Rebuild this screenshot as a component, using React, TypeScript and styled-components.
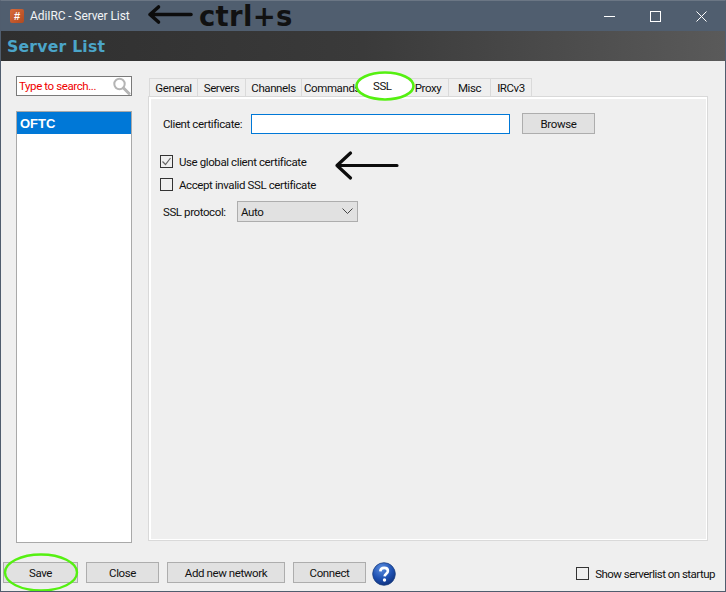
import React from "react";
import styled, { createGlobalStyle } from "styled-components";

const Global = createGlobalStyle`
  html, body { margin: 0; padding: 0; background: #efefef; }
  * { box-sizing: border-box; }
`;

const Window = styled.div`
  position: relative;
  width: 726px;
  height: 592px;
  display: flex;
  flex-direction: column;
  background: #efefef;
  border: 1px solid #505d6e;
  border-top-color: #6b7684;
  font-family: "Roboto", "Liberation Sans", sans-serif;
  font-size: 11.5px;
  letter-spacing: -0.4px;
  color: #111;
  overflow: hidden;
`;

const TitleBar = styled.div`
  height: 30px;
  flex: none;
  display: flex;
  align-items: center;
  background: #505e6f;
  color: #f2f4f6;
  padding-left: 9px;
`;

const AppIcon = styled.div`
  width: 14px;
  height: 14px;
  border-radius: 2px;
  background: linear-gradient(135deg, #d96a3a, #b04a20);
  color: #fff;
  font: bold 11px/14px "Liberation Sans", sans-serif;
  letter-spacing: 0;
  text-align: center;
`;

const TitleText = styled.span`
  margin-left: 6px;
  font-size: 12px;
  letter-spacing: -0.1px;
`;

const WindowControls = styled.div`
  margin-left: auto;
  display: flex;
  align-items: center;
  padding-right: 1px;
`;

const ControlCell = styled.div`
  width: 46px;
  height: 30px;
  display: flex;
  align-items: center;
  justify-content: center;
`;

const Banner = styled.div`
  height: 30px;
  flex: none;
  display: flex;
  align-items: center;
  padding-left: 6px;
  background: linear-gradient(90deg, #2f2f2f, #3a3a3a 50%, #5a5a5a);
  color: #4ba5c9;
  font: bold 15.7px "DejaVu Sans", sans-serif;
  letter-spacing: 0.2px;
`;

const Body = styled.div`
  height: 482px;
  flex: none;
  display: flex;
  padding: 15px 17px 0 15px;
`;

const LeftColumn = styled.div`
  width: 116px;
  flex: none;
  display: flex;
  flex-direction: column;
`;

const SearchBox = styled.div`
  height: 20px;
  flex: none;
  display: flex;
  align-items: center;
  justify-content: space-between;
  padding: 0 0 0 2px;
  background: #fff;
  border: 1px solid #7a7a7a;
  color: #f00000;
`;

const NetworkList = styled.div`
  margin-top: 15px;
  height: 432px;
  flex: none;
  background: #fff;
  border: 1px solid #a9a9a9;
`;

const NetworkItem = styled.div<{ $selected?: boolean }>`
  height: 22px;
  padding-left: 3px;
  display: flex;
  align-items: center;
  background: ${(p) => (p.$selected ? "#0078d7" : "transparent")};
  color: ${(p) => (p.$selected ? "#fff" : "#111")};
  font: bold 13px "Liberation Sans", sans-serif;
  letter-spacing: 0;
`;

const RightColumn = styled.div`
  flex: 1;
  min-width: 0;
  margin-left: 16px;
  padding-top: 2px;
  display: flex;
  flex-direction: column;
`;

const TabRow = styled.div`
  display: flex;
  height: 18px;
  flex: none;
  padding-left: 1px;
`;

const Tab = styled.div<{ $w: number; $active?: boolean }>`
  width: ${(p) => p.$w}px;
  height: 18px;
  display: flex;
  align-items: center;
  justify-content: center;
  white-space: nowrap;
  background: ${(p) => (p.$active ? "#fff" : "#efefef")};
  border: 1px solid #dadada;
  border-bottom: none;
  margin-right: -1px;
  padding-top: 1px;
`;

const Panel = styled.div`
  height: 445px;
  flex: none;
  background: #efefef;
  border: 1px solid #d9d9d9;
  box-shadow: inset 2px 2px 0 #fff, inset -1px -1px 0 #fff;
  padding: 16px 0 0 11px;
  display: flex;
  flex-direction: column;
`;

const Row = styled.div`
  display: flex;
  align-items: center;
  white-space: nowrap;
`;

const FieldLabel = styled.span<{ $w: number; $shift: number }>`
  width: ${(p) => p.$w}px;
  margin-left: ${(p) => p.$shift}px;
  flex: none;
`;

const TextInput = styled.div`
  width: 259px;
  height: 20px;
  background: #fff;
  border: 1px solid #0078d7;
`;

const Button = styled.div<{ $w: number }>`
  width: ${(p) => p.$w}px;
  height: 21px;
  flex: none;
  display: flex;
  align-items: center;
  justify-content: center;
  background: #e1e1e1;
  border: 1px solid #adadad;
`;

const BrowseButton = styled(Button)`
  margin-left: 12px;
`;

const CheckRow = styled(Row)<{ $top: number }>`
  margin-top: ${(p) => p.$top}px;
  height: 13px;
  gap: 6px;
`;

const Box = styled.div`
  width: 13px;
  height: 13px;
  flex: none;
  background: transparent;
  border: 1px solid #333;
  display: flex;
  align-items: center;
  justify-content: center;
`;

const SelectRow = styled(Row)`
  margin-top: 10px;
`;

const Select = styled.div`
  width: 121px;
  height: 21px;
  display: flex;
  align-items: center;
  justify-content: space-between;
  padding: 0 4px 0 3px;
  background: #e1e1e1;
  border: 1px solid #adadad;
`;

const Footer = styled.div`
  flex: 1;
  display: flex;
  align-items: flex-start;
  padding: 19px 10px 0 2px;
  gap: 8px;
`;

const HelpWrap = styled.div`
  width: 24px;
  height: 24px;
  flex: none;
  margin-left: -2px;
`;

const StartupOption = styled(Row)`
  margin-left: auto;
  gap: 6px;
  height: 21px;
  position: relative;
  top: 1px;
  letter-spacing: -0.52px;
`;

const Overlay = styled.svg<{ $x: number; $y: number }>`
  position: absolute;
  left: ${(p) => p.$x}px;
  top: ${(p) => p.$y}px;
  overflow: visible;
  pointer-events: none;
`;

const Scribble = styled.span`
  position: absolute;
  left: 198px;
  top: -2px;
  color: #111;
  font: bold 27.5px/34px "DejaVu Sans", sans-serif;
  letter-spacing: 0.3px;
  white-space: nowrap;
`;

const SslLabel = styled.span`
  position: absolute;
  left: 372px;
  top: 78px;
  color: #111;
`;

const tabs: [string, number, boolean?][] = [
  ["General", 49],
  ["Servers", 49],
  ["Channels", 57],
  ["Commands", 62],
  ["", 46, true],
  ["Proxy", 42],
  ["Misc", 43],
  ["IRCv3", 42],
];

const ArrowLeft = ({ x, y, w, h, sw }: { x: number; y: number; w: number; h: number; sw: number }) => (
  <Overlay $x={x} $y={y} width={w} height={h} viewBox={`0 0 ${w} ${h}`} fill="none" stroke="#0c0c0c" strokeWidth={sw} strokeLinecap="round" strokeLinejoin="round">
    <path d={`M2 ${h / 2}H${w - 2}M${h / 2 + 1} 2L2 ${h / 2}L${h / 2 + 1} ${h - 2}`} />
  </Overlay>
);

export default function App() {
  return (
    <Window>
      <Global />
      <TitleBar>
        <AppIcon>#</AppIcon>
        <TitleText>AdiIRC - Server List</TitleText>
        <WindowControls>
          <ControlCell>
            <svg width="11" height="11" viewBox="0 0 11 11" stroke="#fff" fill="none"><path d="M0 5.5h11" /></svg>
          </ControlCell>
          <ControlCell>
            <svg width="11" height="11" viewBox="0 0 11 11" stroke="#fff" fill="none"><rect x="0.5" y="0.5" width="10" height="10" /></svg>
          </ControlCell>
          <ControlCell>
            <svg width="11" height="11" viewBox="0 0 11 11" stroke="#fff" fill="none"><path d="M0.5 0.5l10 10M10.5 0.5l-10 10" /></svg>
          </ControlCell>
        </WindowControls>
      </TitleBar>
      <Banner>Server List</Banner>
      <Body>
        <LeftColumn>
          <SearchBox>
            Type to search...
            <svg width="19" height="18" viewBox="0 0 19 18" fill="none" stroke="#b5b5b5">
              <circle cx="7.5" cy="7" r="5.2" strokeWidth="2" />
              <path d="M11.5 11l5.5 5.5" strokeWidth="3" strokeLinecap="round" />
            </svg>
          </SearchBox>
          <NetworkList>
            <NetworkItem $selected>OFTC</NetworkItem>
          </NetworkList>
        </LeftColumn>
        <RightColumn>
          <TabRow>
            {tabs.map(([label, w, active], i) => (
              <Tab key={i} $w={w} $active={active}>{label}</Tab>
            ))}
          </TabRow>
          <Panel>
            <Row>
              <FieldLabel $w={88} $shift={3}>Client certificate:</FieldLabel>
              <TextInput />
              <BrowseButton $w={73}>Browse</BrowseButton>
            </Row>
            <CheckRow $top={21}>
              <Box>
                <svg width="11" height="11" viewBox="0 0 11 11" fill="none" stroke="#666" strokeWidth="1.2">
                  <path d="M1.5 5.5l3 3 5-6.5" />
                </svg>
              </Box>
              Use global client certificate
            </CheckRow>
            <CheckRow $top={10}>
              <Box />
              Accept invalid SSL certificate
            </CheckRow>
            <SelectRow>
              <FieldLabel $w={74} $shift={3}>SSL protocol:</FieldLabel>
              <Select>
                Auto
                <svg width="11" height="7" viewBox="0 0 11 7" fill="none" stroke="#444"><path d="M0.5 0.5L5.5 5.5L10.5 0.5" /></svg>
              </Select>
            </SelectRow>
          </Panel>
        </RightColumn>
      </Body>
      <Footer>
        <Button $w={75}>Save</Button>
        <Button $w={73}>Close</Button>
        <Button $w={118}>Add new network</Button>
        <Button $w={73}>Connect</Button>
        <HelpWrap>
          <svg width="24" height="24" viewBox="0 0 24 24">
            <defs>
              <radialGradient id="helpGrad" cx="40%" cy="25%" r="80%">
                <stop offset="0" stopColor="#5a8de0" />
                <stop offset="0.6" stopColor="#1d4fb0" />
                <stop offset="1" stopColor="#0f2f78" />
              </radialGradient>
            </defs>
            <circle cx="12" cy="12" r="11.3" fill="url(#helpGrad)" stroke="#1b3f80" strokeWidth="0.8" />
            <path d="M8.3 9.3c.2-2.2 1.8-3.4 3.9-3.4 2.2 0 3.7 1.3 3.7 3.1 0 2.6-3.2 2.8-3.3 5.4" fill="none" stroke="#fff" strokeWidth="2.6" />
            <circle cx="12.5" cy="18" r="1.7" fill="#fff" />
          </svg>
        </HelpWrap>
        <StartupOption>
          <Box />
          Show serverlist on startup
        </StartupOption>
      </Footer>

      <ArrowLeft x={147} y={4} w={45} h={19} sw={3.6} />
      <Scribble>ctrl+s</Scribble>
      <ArrowLeft x={334} y={150} w={64} h={29} sw={3.2} />
      <Overlay $x={354} $y={70} width={60} height={30} viewBox="0 0 60 30" fill="#fff" stroke="#55f011" strokeWidth="2.6">
        <ellipse cx="30" cy="15" rx="28.5" ry="13.5" />
      </Overlay>
      <SslLabel>SSL</SslLabel>
      <Overlay $x={2} $y={552} width={77} height={39} viewBox="0 0 77 39" fill="none" stroke="#55f011" strokeWidth="2.4">
        <ellipse cx="38" cy="19.5" rx="36" ry="18" />
      </Overlay>
    </Window>
  );
}
